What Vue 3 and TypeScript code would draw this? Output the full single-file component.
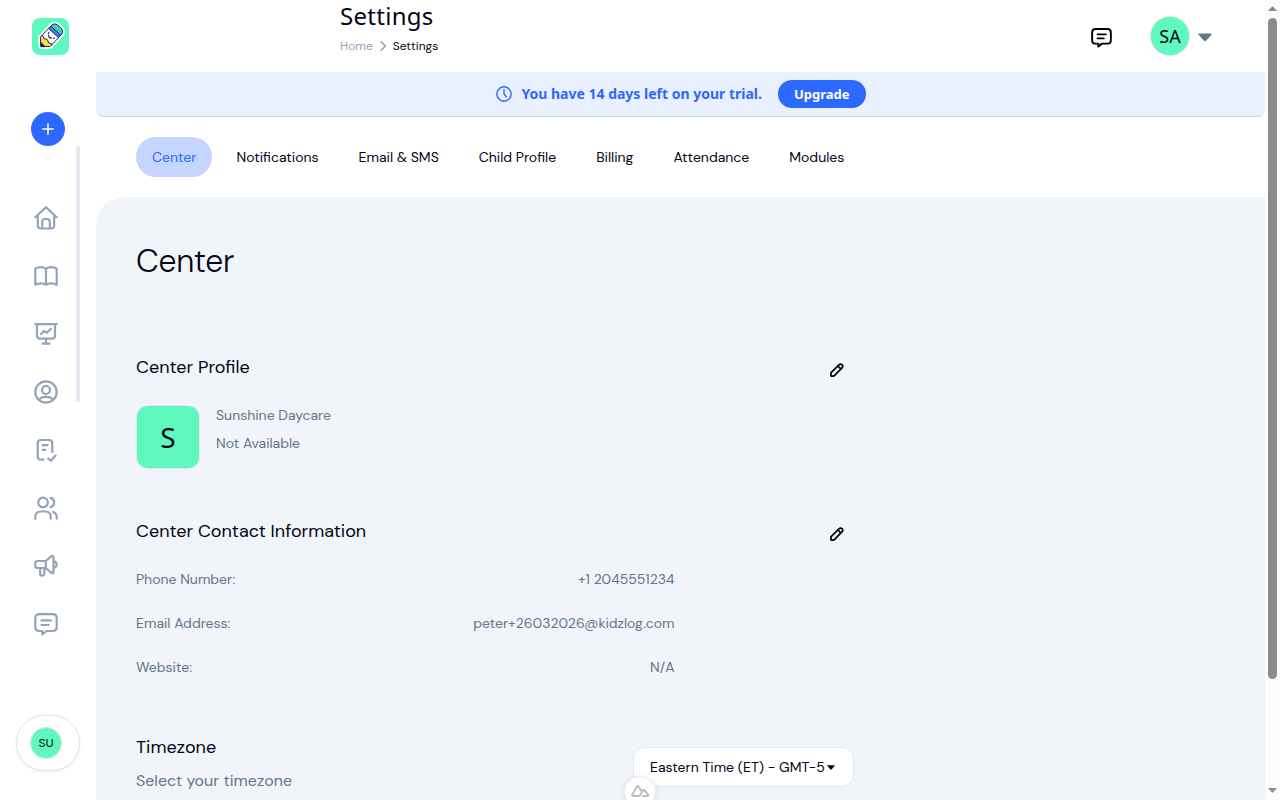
<script setup lang="ts">
interface ContactRow {
  label: string
  value: string
}

const tabs: string[] = ['Center', 'Notifications', 'Email & SMS', 'Child Profile', 'Billing', 'Attendance', 'Modules']

const contact: ContactRow[] = [
  { label: 'Phone Number:', value: '+1 2045551234' },
  { label: 'Email Address:', value: 'peter+26032026@kidzlog.com' },
  { label: 'Website:', value: 'N/A' },
]

const chat =
  'M5.3 2.2H18.7Q22.7 2.2 22.7 6.2V15Q22.7 19 18.7 19H12.7L8.3 22.4V19H5.3Q1.3 19 1.3 15V6.2Q1.3 2.2 5.3 2.2ZM7.5 8.4H17M7.5 13H14.6'

const pencil =
  'M1.1 9.6L9.2 1.6Q10.6 .4 12 1.7Q13.4 3.1 12.2 4.6L4.4 12.6Q.9 13.8 .9 12.6ZM7.9 3L10.8 5.9'

const navIcons: string[] = [
  'M1.3 11.2L12 1.3L22.7 11.2M3.8 9.5V19.5Q3.8 22.5 6.8 22.5H17.2Q20.2 22.5 20.2 19.5V9.5M8.2 22V15.7Q8.2 13 10.9 13H13.1Q15.8 13 15.8 15.7V22',
  'M12 4.8Q9.8 3.2 6.8 3.2Q3.8 3.2 1.3 4.7V20.7Q3.8 19.3 6.8 19.3Q9.8 19.3 12 20.7Q14.2 19.3 17.2 19.3Q20.2 19.3 22.7 20.7V4.7Q20.2 3.2 17.2 3.2Q14.2 3.2 12 4.8ZM12 4.8V20.5',
  'M1.3 2.2H22.7M3 2.2V13.7Q3 16.7 6 16.7H18Q21 16.7 21 13.7V2.2M12 17V21.7M8.5 21.7H15.5M7 12.2L9.9 9L12.8 10.7L17 6.7',
  'M12 1.3A10.7 10.7 0 1 1 12 22.7A10.7 10.7 0 1 1 12 1.3ZM12 6A4 4 0 1 1 12 14A4 4 0 1 1 12 6ZM5.3 20C6.7 15.8 17.3 15.8 18.7 20',
  'M18.3 14V5.3Q18.3 2 15 2H7Q3.7 2 3.7 5.3V18Q3.7 21.7 7.2 21.7H9.3M8.6 7.2H13.5M8.6 11.8H11.2M14.2 20.5L16.8 22.7L21.6 17.5',
  'M9 1.7A4.8 4.8 0 1 1 9 11.3A4.8 4.8 0 1 1 9 1.7ZM1.3 22.7V21Q1.3 15.5 6.8 15.5H11.2Q16.7 15.5 16.7 21V22.7M16.7 1.9A4.8 4.8 0 0 1 16.7 11.1M19.2 16Q22.7 17.3 22.7 21.2V22.7',
  'M11.8 7H3.5Q1.3 7 1.3 9.2V11.8Q1.3 14 3.5 14H11.8ZM11.8 7L17.4 2.2Q19.5 1 19.5 3.3V17.7Q19.5 20 17.4 18.8L11.8 14M6.2 14V19.5Q6.2 21.7 8.4 21.7Q10.3 21.7 10.3 19.5V14M19.8 7.3Q22.7 8 22.7 10.6Q22.7 13.2 19.8 14',
  chat,
]
</script>

<template>
  <div class="window">
    <aside class="sidebar">
      <svg class="logo" viewBox="0 0 37 37">
        <rect width="37" height="37" rx="8" fill="#5ff9bf" />
        <g transform="translate(18.8 18) rotate(43)" stroke-linejoin="round">
          <path d="M-6.8 -8Q-6.8 -13 0 -13Q6.8 -13 6.8 -8V8L0 14.7L-6.8 8Z" fill="#fff" stroke="#fff" stroke-width="4.4" />
          <path d="M-6.8 -8Q-6.8 -13 0 -13Q6.8 -13 6.8 -8V-6.5H-6.8Z" fill="#35d6ae" />
          <path d="M-6.8 -7.3H6.8V-4H-6.8Z" fill="#3f7df0" />
          <path d="M-6.8 -4H6.8V6H-6.8Z" fill="#fff" />
          <path d="M-6.8 5L-3.4 6.5L0 5L3.4 6.5L6.8 5V8L0 14.7L-6.8 8Z" fill="#f5e042" />
          <path d="M-3.6 11.2H3.6L0 14.7Z" fill="#17175c" />
          <path
            d="M-6.8 -8Q-6.8 -13 0 -13Q6.8 -13 6.8 -8V8L0 14.7L-6.8 8ZM-6.8 -7.3H6.8M-6.8 -4H6.8M-6.8 5L-3.4 6.5L0 5L3.4 6.5L6.8 5"
            fill="none"
            stroke="#17175c"
            stroke-width=".9"
          />
          <path d="M-3.7 -1V-.3M3.7 -1V-.3M-2 1Q0 3.2 2 1" fill="none" stroke="#17175c" stroke-width="1.2" stroke-linecap="round" />
        </g>
      </svg>
      <button class="add" aria-label="Add">
        <svg viewBox="0 0 12 12"><path d="M6 .3V11.7M.3 6H11.7" /></svg>
      </button>
      <div class="nav-scroll">
        <nav class="nav">
          <svg v-for="(d, i) in navIcons" :key="i" class="icon" viewBox="0 0 24 24"><path :d="d" /></svg>
        </nav>
        <div class="nav-thumb"></div>
      </div>
      <div class="user-pill"><span class="user-chip">SU</span></div>
    </aside>

    <main class="main">
      <header class="header">
        <div class="heading">
          <h1 class="page-name">Settings</h1>
          <div class="crumbs">
            <span class="crumb-home">Home</span>
            <svg class="crumb-sep" viewBox="0 0 8 12"><path d="M1.6 1.2L6.4 6L1.6 10.8" /></svg>
            <span>Settings</span>
          </div>
        </div>
        <div class="account">
          <svg class="icon chat" viewBox="0 0 24 24"><path :d="chat" /></svg>
          <span class="avatar">SA</span>
          <svg class="caret" viewBox="0 0 14 9"><path d="M1 .5H13Q14.3 .6 13.4 1.7L8 7.7Q7 8.6 6 7.7L.6 1.7Q-.3 .6 1 .5Z" /></svg>
        </div>
      </header>

      <div class="trial">
        <svg class="clock" viewBox="0 0 16 16"><circle cx="8" cy="8" r="7.2" /><path d="M8 3.7V8L10.4 10.7" /></svg>
        <strong class="trial-text">You have 14 days left on your trial.</strong>
        <button class="upgrade">Upgrade</button>
      </div>

      <nav class="tabs">
        <a v-for="(tab, i) in tabs" :key="tab" class="tab" :class="{ active: i === 0 }">{{ tab }}</a>
      </nav>

      <section class="content">
        <h2 class="title">Center</h2>

        <div class="section-head profile-head">
          <h3>Center Profile</h3>
          <svg class="pencil" viewBox="0 0 14 14"><path :d="pencil" /></svg>
        </div>
        <div class="profile">
          <span class="center-logo">S</span>
          <div class="profile-text">
            <span>Sunshine Daycare</span>
            <span>Not Available</span>
          </div>
        </div>

        <div class="section-head contact-head">
          <h3>Center Contact Information</h3>
          <svg class="pencil" viewBox="0 0 14 14"><path :d="pencil" /></svg>
        </div>
        <div class="contact">
          <div v-for="row in contact" :key="row.label" class="contact-row">
            <span>{{ row.label }}</span>
            <span>{{ row.value }}</span>
          </div>
        </div>

        <div class="timezone">
          <div class="timezone-text">
            <h3>Timezone</h3>
            <span class="hint">Select your timezone</span>
          </div>
          <button class="select">
            <span>Eastern Time (ET) - GMT-5</span>
            <svg viewBox="0 0 8 5"><path d="M.7 .3H7.3Q8 .4 7.5 1L4.5 4.5Q4 5 3.5 4.5L.5 1Q0 .4 .7 .3Z" /></svg>
          </button>
        </div>
      </section>
    </main>

    <div class="scrollbar">
      <svg viewBox="0 0 9 5"><path d="M4.5 0L9 5H0Z" /></svg>
      <div class="thumb"></div>
      <svg class="down" viewBox="0 0 9 5"><path d="M0 0H9L4.5 5Z" /></svg>
    </div>

    <div class="devtools">
      <svg viewBox="0 0 20 14"><path d="M8.5 12.2H2.3Q.7 12.2 1.4 10.7L6.2 2.4Q7.1 1.2 8 2.4L10.3 6.3M8.5 12.2Q9.5 11.8 10.1 10.8L12.7 6.2Q13.5 5 14.3 6.2L17.9 11Q18.3 12.2 17.2 12.2H12.6" /></svg>
    </div>
  </div>
</template>

<style>
body {
  margin: 0;
  overflow: hidden;
}
</style>

<style scoped>
* {
  box-sizing: border-box;
}
.window {
  position: relative;
  display: flex;
  width: 1280px;
  height: 800px;
  overflow: hidden;
  background: #fff;
  color: #020617;
  font-family: 'DM Sans', Inter, 'Liberation Sans', sans-serif;
  font-size: 14px;
  line-height: 20px;
  white-space: nowrap;
}
h1,
h2,
h3 {
  margin: 0;
  font-weight: 400;
}
button {
  border: 0;
  padding: 0;
  color: inherit;
  font: inherit;
}
svg {
  display: block;
  flex: none;
}

.sidebar {
  display: flex;
  flex-direction: column;
  flex: none;
  width: 96px;
  padding-top: 18px;
}
.logo {
  width: 37px;
  height: 37px;
  margin-left: 32px;
}
.add {
  display: flex;
  align-items: center;
  justify-content: center;
  width: 34px;
  height: 34px;
  margin: 57px 0 0 31px;
  border-radius: 50%;
  background: #2d68ff;
}
.add svg {
  width: 12px;
  height: 12px;
  fill: none;
  stroke: #fff;
  stroke-width: 1.5;
}
.nav-scroll {
  display: flex;
  height: 569px;
}
.nav {
  display: flex;
  flex-direction: column;
  gap: 34px;
  width: 76px;
  padding: 60px 0 0 34px;
}
.icon {
  width: 24px;
  height: 24px;
  fill: none;
  stroke: #94a3b8;
  stroke-width: 2.2;
  stroke-linecap: round;
  stroke-linejoin: round;
}
.nav-thumb {
  width: 4px;
  height: 256px;
  border-radius: 2px;
  background: #e2e8f0;
}
.user-pill {
  display: flex;
  align-items: center;
  width: 64px;
  height: 56px;
  margin-left: 16px;
  padding-left: 13px;
  border: 1px solid #dfe3f0;
  border-radius: 28px;
  box-shadow: 0 1px 3px rgb(15 23 42 / 7%);
}
.user-chip {
  width: 32px;
  height: 32px;
  border: 1px solid #d5e5e7;
  border-radius: 50%;
  background: #5ff9bf;
  font-family: Inter, 'Liberation Sans', sans-serif;
  font-size: 11px;
  line-height: 30px;
  text-align: center;
}

.main {
  display: flex;
  flex-direction: column;
  flex: none;
  width: 1169px;
}
.header {
  display: flex;
  flex: none;
  justify-content: space-between;
  height: 72px;
  padding: 0 53px 0 244px;
}
.heading {
  display: flex;
  flex-direction: column;
  align-items: flex-start;
}
.page-name {
  font-family: 'Noto Sans', sans-serif;
  font-size: 24px;
  letter-spacing: 0.28px;
  line-height: 32px;
}
.crumbs {
  display: flex;
  align-items: center;
  height: 28px;
  font-size: 12px;
}
.crumb-home {
  color: #94a3b8;
}
.crumb-sep {
  width: 8px;
  height: 12px;
  margin: 0 6px;
  fill: none;
  stroke: #94a3b8;
  stroke-width: 1.5;
}
.account {
  display: flex;
  align-items: center;
}
.chat {
  width: 21px;
  height: 21px;
  margin: 2px 38px 0 0;
  stroke: #000;
}
.avatar {
  width: 40px;
  height: 40px;
  border: 1px solid #d5e5e7;
  border-radius: 50%;
  background: #5ff9bf;
  font-family: 'Noto Sans', sans-serif;
  font-size: 18px;
  line-height: 38px;
  text-align: center;
}
.caret {
  width: 14px;
  height: 9px;
  margin: 2px 0 0 8px;
  fill: #64748b;
}

.trial {
  display: flex;
  flex: none;
  align-items: center;
  justify-content: center;
  height: 45px;
  padding-left: 1px;
  border-bottom: 1px solid #c5d6ff;
  border-radius: 0 0 8px 8px;
  background: #e9f0ff;
  color: #2d68ff;
  font-family: 'Noto Sans', sans-serif;
}
.clock {
  width: 16px;
  height: 16px;
  margin-right: 9px;
  fill: none;
  stroke: #2d68ff;
  stroke-width: 1.4;
  stroke-linecap: round;
}
.upgrade {
  height: 28px;
  margin-left: 16px;
  padding: 0 16px;
  border-radius: 14px;
  background: #2d68ff;
  color: #fff;
  font-size: 13px;
  font-weight: 700;
}

.tabs {
  display: flex;
  flex: none;
  gap: 8px;
  height: 80px;
  padding: 20px 40px;
}
.tab {
  height: 40px;
  padding: 0 16px;
  border-radius: 20px;
  line-height: 40px;
}
.tab.active {
  background: #c5d5ff;
  color: #2d68ff;
}

.content {
  flex: none;
  height: 620px;
  padding: 44px 0 0 40px;
  border-top-left-radius: 28px;
  background: #f1f5f9;
}
.title {
  font-size: 32px;
  font-weight: 350;
  letter-spacing: -0.3px;
  line-height: 40px;
}
h3 {
  font-size: 18px;
  line-height: 28px;
}
.section-head {
  display: flex;
  align-items: flex-start;
  justify-content: space-between;
  width: 708px;
}
.profile-head {
  margin-top: 72px;
}
.pencil {
  width: 14px;
  height: 14px;
  margin-top: 10px;
  fill: none;
  stroke: #000;
  stroke-width: 1.7;
  stroke-linejoin: round;
}
.profile {
  display: flex;
  gap: 16px;
  margin-top: 24px;
  color: #64748b;
}
.center-logo {
  width: 64px;
  height: 64px;
  border: 1px solid #dfe7ee;
  border-radius: 12px;
  background: #5ff9bf;
  color: #020617;
  font-family: 'Noto Sans', sans-serif;
  font-size: 28px;
  line-height: 62px;
  text-align: center;
}
.profile-text {
  display: flex;
  flex-direction: column;
  align-items: flex-start;
  gap: 8px;
}
.contact-head {
  margin-top: 48px;
}
.contact {
  display: flex;
  flex-direction: column;
  gap: 24px;
  width: 538.5px;
  margin-top: 24px;
  color: #64748b;
}
.contact-row {
  display: flex;
  justify-content: space-between;
}
.timezone {
  display: flex;
  justify-content: space-between;
  width: 718px;
  margin-top: 56px;
}
.timezone-text {
  display: flex;
  flex-direction: column;
  align-items: flex-start;
}
.hint {
  margin-top: 8px;
  color: #64748b;
  font-size: 16px;
  line-height: 24px;
}
.select {
  display: flex;
  align-items: center;
  width: 221px;
  height: 40px;
  margin-top: 14px;
  padding-left: 16px;
  border: 1px solid #e2e8f0;
  border-radius: 12px;
  background: #fff;
}
.select svg {
  width: 8px;
  height: 5px;
  margin-left: 2px;
  fill: #000;
}

.scrollbar {
  display: flex;
  flex-direction: column;
  align-items: center;
  width: 15px;
  padding: 6px 0 7px;
  background: #fcfcfc;
}
.scrollbar svg {
  width: 9px;
  height: 5px;
  fill: #8b8b8b;
}
.thumb {
  width: 9px;
  height: 661px;
  margin-top: 7px;
  border-radius: 5px;
  background: #8b8b8b;
}
.scrollbar .down {
  margin-top: auto;
}

.devtools {
  position: absolute;
  left: 624px;
  top: 776px;
  width: 32px;
  height: 32px;
  padding: 7px 6px;
  border: 1px solid #eceef0;
  border-radius: 50%;
  background: #fff;
  box-shadow: 0 1px 6px rgb(0 0 0 / 12%);
}
.devtools svg {
  width: 19px;
  height: 14px;
  fill: none;
  stroke: #b9bcbe;
  stroke-width: 2;
  stroke-linecap: round;
}
</style>
